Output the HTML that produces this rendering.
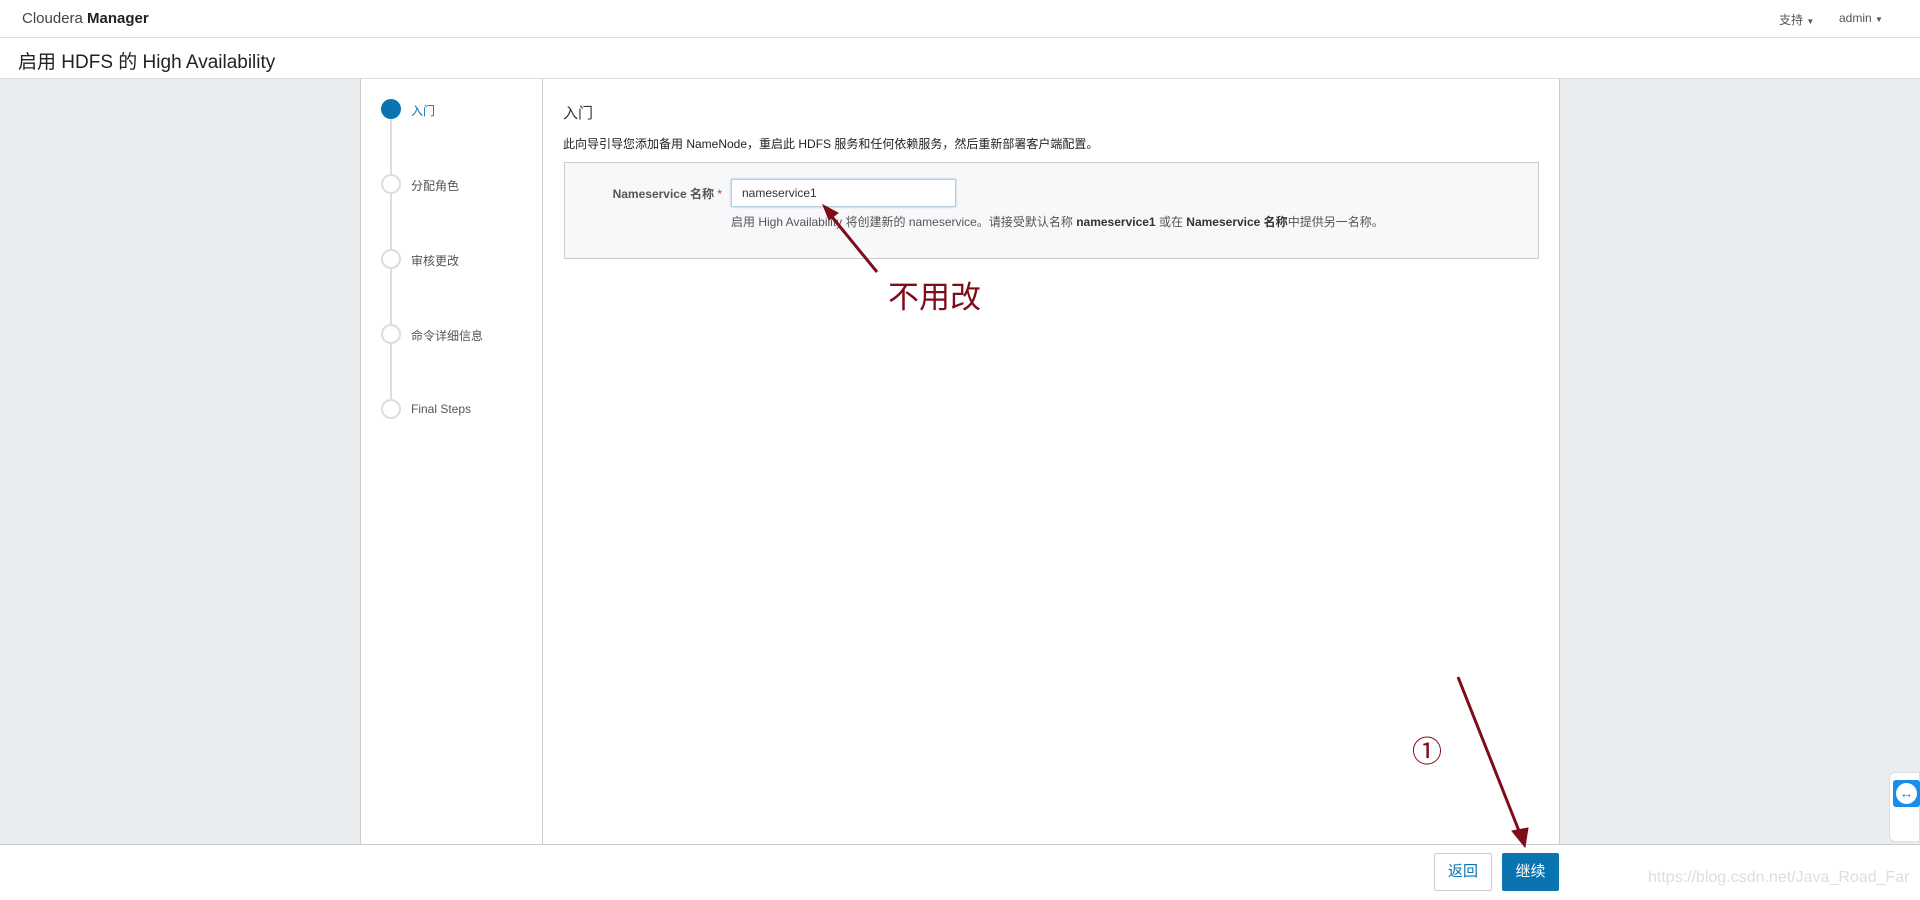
<!DOCTYPE html>
<html><head><meta charset="utf-8"><style>
*{box-sizing:border-box;margin:0;padding:0}
body{width:1920px;height:900px;position:relative;overflow:hidden;font-family:"Liberation Sans","Noto Sans CJK SC",sans-serif;background:#fff;color:#333;font-size:12px}
.abs{position:absolute}
</style></head><body>
<div class="abs" style="left:0;top:0;width:1920px;height:38px;border-bottom:1px solid #ddd;background:#fff"></div>
<div class="abs" style="left:22px;top:10px;font-size:15px;color:#444">Cloudera <b style="color:#222">Manager</b></div>
<div class="abs" style="left:1779px;top:11px;font-size:12px;color:#555">支持 <span style="font-size:8px">▼</span></div>
<div class="abs" style="left:1839px;top:11px;font-size:12px;color:#555">admin <span style="font-size:8px">▼</span></div>
<div class="abs" style="left:0;top:38px;width:1920px;height:41px;border-bottom:1px solid #ddd;background:#fff"></div>
<div class="abs" style="left:18px;top:47px;font-size:19px;color:#222">启用 HDFS 的 High Availability</div>
<div class="abs" style="left:0;top:79px;width:360px;height:765px;background:#e9edf0"></div>
<div class="abs" style="left:1559px;top:79px;width:361px;height:765px;background:#e9edf0;border-left:1px solid #ccc"></div>
<div class="abs" style="left:360px;top:79px;width:183px;height:765px;background:#fff;border-left:1px solid #ccc;border-right:1px solid #ccc"></div>
<div class="abs" style="left:390px;top:110px;width:2px;height:300px;background:#ddd"></div>
<div class="abs" style="left:381px;top:99px;width:20px;height:20px;border-radius:50%;background:#0a74b0"></div>
<div class="abs" style="left:411px;top:102px;color:#0a74b0">入门</div>
<div class="abs" style="left:381px;top:174px;width:20px;height:20px;border-radius:50%;background:#fff;border:2px solid #ddd"></div>
<div class="abs" style="left:411px;top:177px;color:#555">分配角色</div>
<div class="abs" style="left:381px;top:249px;width:20px;height:20px;border-radius:50%;background:#fff;border:2px solid #ddd"></div>
<div class="abs" style="left:411px;top:252px;color:#555">审核更改</div>
<div class="abs" style="left:381px;top:324px;width:20px;height:20px;border-radius:50%;background:#fff;border:2px solid #ddd"></div>
<div class="abs" style="left:411px;top:327px;color:#555">命令详细信息</div>
<div class="abs" style="left:381px;top:399px;width:20px;height:20px;border-radius:50%;background:#fff;border:2px solid #ddd"></div>
<div class="abs" style="left:411px;top:402px;color:#555">Final Steps</div>
<div class="abs" style="left:563px;top:102px;font-size:15px;color:#333">入门</div>
<div class="abs" style="left:563px;top:135px;font-size:12px;color:#222">此向导引导您添加备用 NameNode，重启此 HDFS 服务和任何依赖服务，然后重新部署客户端配置。</div>
<div class="abs" style="left:564px;top:162px;width:975px;height:97px;background:#f7f8fa;border:1px solid #ccc"></div>
<div class="abs" style="left:600px;top:185px;width:122px;text-align:right;font-size:12px;color:#555;font-weight:bold">Nameservice 名称 <span style="color:#c33;font-weight:normal">*</span></div>
<div class="abs" style="left:731px;top:179px;width:225px;height:28px;border:1px solid #bcd;background:#fff;box-shadow:0 0 2px #9bd;padding:6px 10px;font-size:12px;color:#333">nameservice1</div>
<div class="abs" style="left:731px;top:213px;font-size:12px;color:#555">启用 High Availability 将创建新的 nameservice。请接受默认名称 <b style="color:#333">nameservice1</b> 或在 <b style="color:#333">Nameservice 名称</b>中提供另一名称。</div>
<div class="abs" style="left:888px;top:272px;font-size:31px;color:#7e0c19">不用改</div>
<div class="abs" style="left:1412px;top:727px;font-size:30px;color:#7e0c19">①</div>
<div class="abs" style="left:0;top:844px;width:1920px;height:56px;background:#fff;border-top:1px solid #ccc"></div>
<div class="abs" style="left:1434px;top:853px;width:58px;height:38px;border:1px solid #ccc;border-radius:2px;text-align:center;line-height:36px;font-size:15px;color:#0a74b0;background:#fff">返回</div>
<div class="abs" style="left:1502px;top:853px;width:57px;height:38px;border-radius:2px;text-align:center;line-height:38px;font-size:15px;color:#fff;background:#0a74b0">继续</div>
<div class="abs" style="left:1648px;top:869px;font-size:16px;color:#ddd">https://blog.csdn.net/Java_Road_Far</div>
<div class="abs" style="left:1889px;top:772px;width:31px;height:70px;background:#fff;border:1px solid #ddd;border-radius:6px 0 0 6px"></div>
<div class="abs" style="left:1893px;top:780px;width:27px;height:27px;background:#1a8de8;border-radius:3px"><div style="margin:3px;width:21px;height:21px;border-radius:50%;background:#fff;color:#1a8de8;text-align:center;line-height:21px;font-size:14px;font-weight:bold">↔</div></div>
<svg class="abs" style="left:0;top:0" width="1920" height="900">
<g stroke="#7e0c19" stroke-width="3" fill="#7e0c19">
<line x1="877" y1="272" x2="828" y2="212"/><polygon points="823,205 838,213 829,220" stroke-width="1"/>
<line x1="1458" y1="677" x2="1521" y2="836"/><polygon points="1525,847 1512,831 1528,828" stroke-width="1"/>
</g></svg>
</body></html>
